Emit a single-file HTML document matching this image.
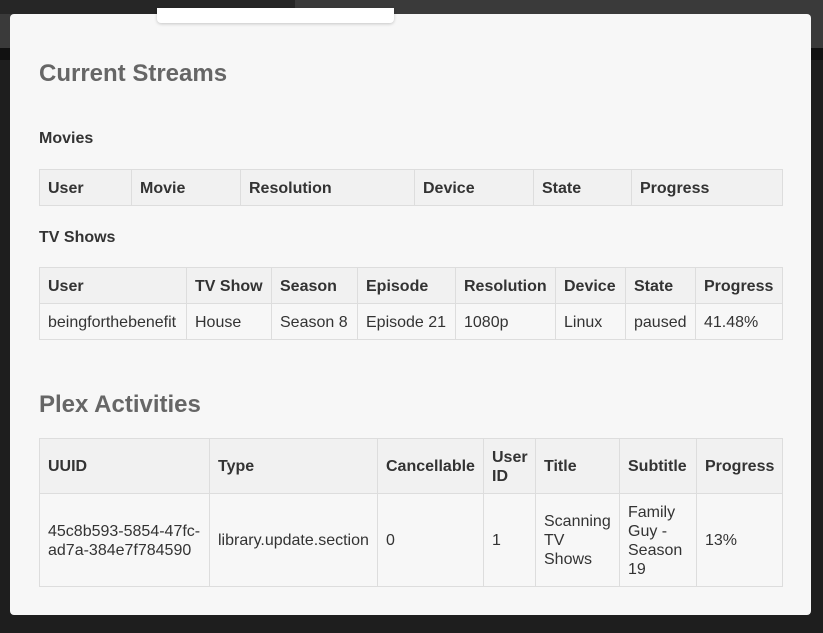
<!DOCTYPE html>
<html><head><meta charset="utf-8"><style>
*{box-sizing:border-box;margin:0;padding:0}
body{width:823px;height:633px;overflow:hidden;background:#1e1e1e;font-family:"Liberation Sans",sans-serif;position:relative}
.topbar{position:absolute;left:0;top:0;width:823px;height:14px;background:#3a3a3a}
.url{position:absolute;left:0;top:0;width:295px;height:14px;background:#262626;border-radius:0 0 4px 0}
.tab2{position:absolute;left:0;top:14px;width:823px;height:34px;background:#3a3a3a}
.bar3{position:absolute;left:0;top:48px;width:823px;height:12px;background:#111}
.modal{position:absolute;left:10px;top:14px;width:801px;height:601px;background:#f7f7f7;border-radius:4px}
.pop{position:absolute;left:157px;top:8px;width:237px;height:15px;background:#fff;border-radius:0 0 4px 4px;box-shadow:0 1px 3px rgba(0,0,0,.2)}
h2{position:absolute;left:39px;font-size:24px;font-weight:bold;color:#666}
h4{position:absolute;left:39px;font-size:16px;font-weight:bold;color:#333}
table{position:absolute;left:39px;width:743px;border-collapse:collapse;table-layout:fixed;font-size:16px;color:#333}
td,th{border:1px solid #ddd;padding:1px 8px 0;text-align:left;vertical-align:middle;line-height:19px}
th{background:#f1f1f1;font-weight:bold}
</style></head><body>
<div class="topbar"></div><div class="url"></div><div class="tab2"></div><div class="bar3"></div>
<div class="modal"></div>
<div class="pop"></div>
<h2 style="top:60px">Current Streams</h2>
<h4 style="top:130px">Movies</h4>
<table style="top:169px"><colgroup><col style="width:92px"><col style="width:109px"><col style="width:174px"><col style="width:119px"><col style="width:98px"><col style="width:151px"></colgroup>
<tr style="height:36px"><th>User</th><th>Movie</th><th>Resolution</th><th>Device</th><th>State</th><th>Progress</th></tr></table>
<h4 style="top:229px">TV Shows</h4>
<table style="top:267px"><colgroup><col style="width:147px"><col style="width:85px"><col style="width:86px"><col style="width:98px"><col style="width:100px"><col style="width:70px"><col style="width:70px"><col style="width:87px"></colgroup>
<tr style="height:36px"><th>User</th><th>TV Show</th><th>Season</th><th>Episode</th><th>Resolution</th><th>Device</th><th>State</th><th>Progress</th></tr>
<tr style="height:36px"><td>beingforthebenefit</td><td>House</td><td>Season 8</td><td>Episode 21</td><td>1080p</td><td>Linux</td><td>paused</td><td>41.48%</td></tr></table>
<h2 style="top:391px">Plex Activities</h2>
<table style="top:438px"><colgroup><col style="width:170px"><col style="width:168px"><col style="width:106px"><col style="width:52px"><col style="width:84px"><col style="width:77px"><col style="width:86px"></colgroup>
<tr style="height:55px"><th>UUID</th><th>Type</th><th>Cancellable</th><th>User ID</th><th>Title</th><th>Subtitle</th><th>Progress</th></tr>
<tr style="height:93px"><td>45c8b593-5854-47fc-ad7a-384e7f784590</td><td>library.update.section</td><td>0</td><td>1</td><td>Scanning TV Shows</td><td>Family Guy - Season 19</td><td>13%</td></tr></table>
</body></html>
